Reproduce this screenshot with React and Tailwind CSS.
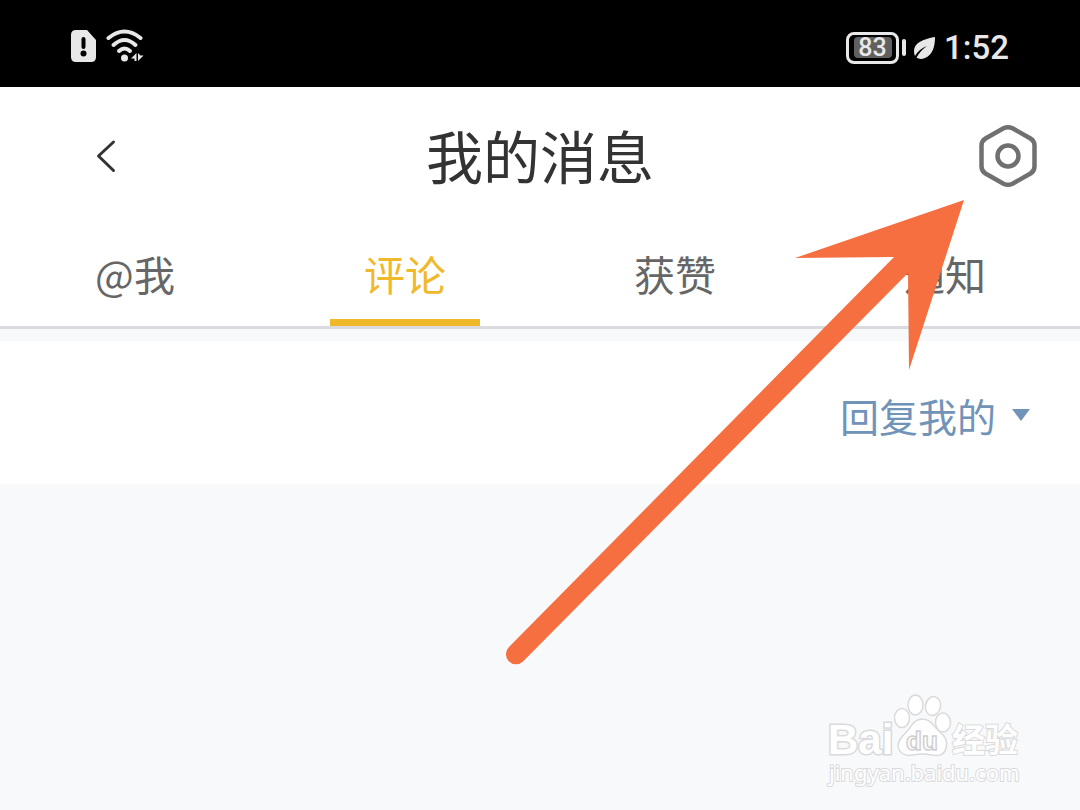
import React, { useState } from "react";

const TABS = ["@我", "评论", "获赞", "通知"];

const FILTERS = ["回复我的", "我发出的"];

const StatusBar = () => (
  <div className="flex items-center justify-between h-[87px] bg-black pl-[70px] pr-[71px] pt-1">
    <div className="flex items-center gap-2">
      {/* SIM alert */}
      <svg width="27" height="34" viewBox="0 0 27 34">
        <path d="M6 1H17L26 11V28Q26 33 21 33H6Q1 33 1 28V6Q1 1 6 1Z" fill="#e8e8e8" />
        <path d="M13.5 10V18" stroke="#000" strokeWidth="4" strokeLinecap="round" />
        <circle cx="13.5" cy="24.5" r="3" fill="#000" />
      </svg>
      {/* Wifi */}
      <svg width="40" height="34" viewBox="0 0 40 34">
        <g fill="none" stroke="#e8e8e8" strokeWidth="4" strokeLinecap="round">
          <path d="M3.500 9Q19.500 -4 35.500 9" />
          <path d="M8.500 16Q19.500 6 30.500 16" />
          <path d="M14 22Q19.500 17 25 22" />
        </g>
        <circle cx="19.500" cy="29" r="3.500" fill="#e8e8e8" />
        <path d="M31.500 24V32H29.500V29.500H26ZM33 24V32L38.500 26.500H35.500Z" fill="#e8e8e8" />
      </svg>
    </div>

    <div className="flex items-center pt-1 text-[#e8e8e8]">
      <div className="flex items-center justify-center w-[53px] h-8 border-[3px] border-[#e8e8e8] rounded-lg">
        <span className="w-[38px] h-[21px] rounded-sm bg-[#606060] text-center text-[25px] leading-[21px] font-medium font-[Roboto,sans-serif]">
          83
        </span>
      </div>
      <div className="w-1 h-[17px] ml-[3px] rounded-sm bg-[#e8e8e8]" />
      {/* Power saving leaf */}
      <svg width="24" height="24" viewBox="0 0 24 24" className="ml-1.5">
        <path d="M23 1C11 3 2 7 2 15Q2 18 3 20Q7 13 15 10Q8 15 4.500 21.500Q8 24 13 22C20 19 23 12 23 1Z" fill="#e8e8e8" />
      </svg>
      <span className="ml-2 text-[33px] leading-10 font-medium font-[Roboto,sans-serif]">1:52</span>
    </div>
  </div>
);

const Header = () => (
  <header className="grid grid-cols-3 items-center h-[138px] pl-[86px] pr-[42px]">
    <button type="button" aria-label="返回" className="justify-self-start p-2">
      <svg width="24" height="36" viewBox="0 0 24 36" fill="none" stroke="#333" strokeWidth="3" strokeLinecap="round" strokeLinejoin="round">
        <path d="M19.500 4L4.500 18L19.500 32.500" />
      </svg>
    </button>
    <h1 className="justify-self-center -ml-11 pb-1 whitespace-nowrap text-[57px] leading-[72px] text-[#333]">我的消息</h1>
    <button type="button" aria-label="设置" className="justify-self-end">
      <svg width="60" height="64" viewBox="0 0 60 64" fill="none" stroke="#707070" strokeWidth="4.500">
        <path d="M25.500 4.300Q30 2 34.500 4.300L52.500 14.500Q56.500 17 56.500 21.500V42.500Q56.500 47 52.500 49.500L34.500 59.700Q30 62 25.500 59.700L7.500 49.500Q3.500 47 3.500 42.500V21.500Q3.500 17 7.500 14.500Z" />
        <circle cx="30" cy="32" r="10.500" />
      </svg>
    </button>
  </header>
);

// Hand-drawn pointer towards the settings button
const Arrow = () => (
  <svg width="460" height="466" viewBox="0 0 460 466" className="absolute left-[505px] top-[200px] pointer-events-none">
    <path
      d="M459 0L290 58L389 57L4 447A10 10 0 0 0 18 461.500L403 73L404 170Z"
      fill="#f66f40"
    />
  </svg>
);

const Watermark = () => (
  <svg width="204" height="100" viewBox="0 0 204 100" className="absolute left-[824px] top-[690px] pointer-events-none">
    <g fill="#fff" stroke="#dadadc" strokeWidth="1.500">
      <text x="4" y="64" fontSize="42" fontWeight="700" fontFamily="Liberation Sans, sans-serif" strokeWidth="3" paintOrder="stroke">Bai</text>
      <ellipse cx="78" cy="28" rx="7.500" ry="9.500" />
      <ellipse cx="91.500" cy="15" rx="7.500" ry="10" />
      <ellipse cx="109" cy="16" rx="7.500" ry="9.500" transform="rotate(12 109 16)" />
      <ellipse cx="119" cy="32.500" rx="7.500" ry="9.500" />
      <path d="M98 29C107 29 110 37 116 42C122 47 124 52 122 58C120 66 114 66 108 65Q98 63 89 65C80 67 75 62 74 56C74 49 80 45 85 39C89 33 92 29 98 29Z" />
      <text x="82" y="60" fontSize="26" fontWeight="700" fontFamily="Liberation Sans, sans-serif" stroke="#cfcfd1">du</text>
      <text x="128" y="62" fontSize="33" fontWeight="700" fontFamily="Noto Sans CJK SC, sans-serif" strokeWidth="2" paintOrder="stroke">经验</text>
      <text x="5" y="91" fontSize="22" fontFamily="Noto Sans, sans-serif" strokeWidth="2" paintOrder="stroke">jingyan.baidu.com</text>
    </g>
  </svg>
);

const App = () => {
  const [active, setActive] = useState("评论");
  const [filter, setFilter] = useState(FILTERS[0]);

  return (
    <div className="relative min-h-screen overflow-hidden bg-[#f7f9fb] font-['Noto_Sans_CJK_SC',sans-serif]">
      <StatusBar />

      <div className="bg-white">
        <Header />

        {/* Tabs */}
        <div role="tablist" className="grid grid-cols-4 h-[104px] border-b-[3px] border-[#d9dbe1]">
          {TABS.map((tab) => (
            <button
              key={tab}
              type="button"
              role="tab"
              aria-selected={active === tab}
              onClick={() => setActive(tab)}
              className={`flex flex-col items-center justify-between pt-[18px] text-[41px] leading-[60px] ${
                active === tab ? "text-[#f0b92c]" : "text-[#666]"
              }`}
            >
              {tab}
              <span className={`w-[150px] h-[7px] ${active === tab ? "bg-[#f0b92c]" : ""}`} />
            </button>
          ))}
        </div>
      </div>

      {/* Filter */}
      <div className="flex items-center justify-end h-[143px] mt-3 pt-1 pr-[50px] bg-white">
        <label className="flex items-center gap-[15px]">
          <select
            aria-label="筛选评论"
            value={filter}
            onChange={(e) => setFilter(e.target.value)}
            className="appearance-none bg-transparent text-[39px] leading-[60px] text-[#7193b8] outline-none"
          >
            {FILTERS.map((item) => (
              <option key={item} value={item}>{item}</option>
            ))}
          </select>
          <svg width="18" height="12" viewBox="0 0 18 12">
            <path d="M0 0H18L9 12Z" fill="#7193b8" />
          </svg>
        </label>
      </div>

      <Arrow />
      <Watermark />
    </div>
  );
};

export default App;
